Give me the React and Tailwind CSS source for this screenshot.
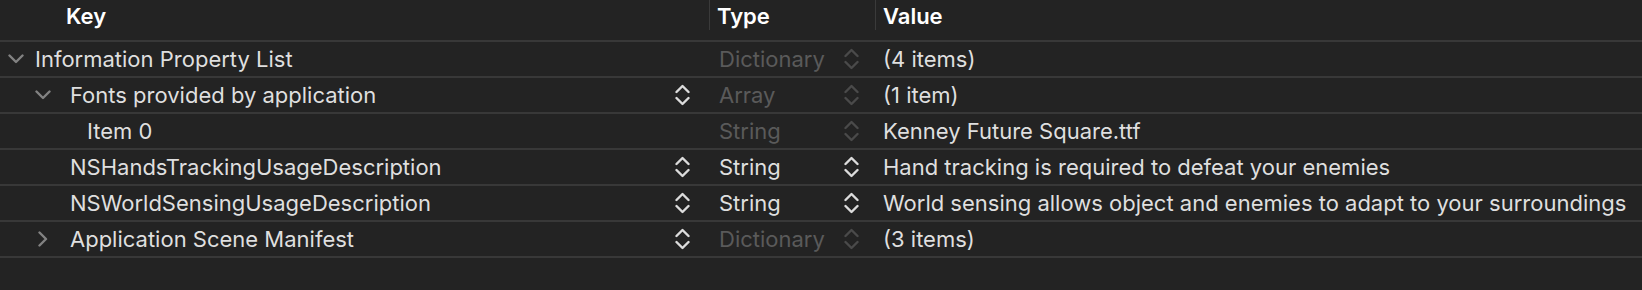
import React from 'react';

const rows = [
  { key: 'Information Property List', level: 0, toggle: 'open', keyStepper: false, type: 'Dictionary', typeDim: true, value: '(4 items)' },
  { key: 'Fonts provided by application', level: 1, toggle: 'open', keyStepper: true, type: 'Array', typeDim: true, value: '(1 item)' },
  { key: 'Item 0', level: 2, toggle: null, keyStepper: false, type: 'String', typeDim: true, value: 'Kenney Future Square.ttf' },
  { key: 'NSHandsTrackingUsageDescription', level: 1, toggle: null, keyStepper: true, type: 'String', typeDim: false, value: 'Hand tracking is required to defeat your enemies' },
  { key: 'NSWorldSensingUsageDescription', level: 1, toggle: null, keyStepper: true, type: 'String', typeDim: false, value: 'World sensing allows object and enemies to adapt to your surroundings' },
  { key: 'Application Scene Manifest', level: 1, toggle: 'closed', keyStepper: true, type: 'Dictionary', typeDim: true, value: '(3 items)' },
];

const Stepper = ({ dim }) => (
  <svg width="15" height="22" viewBox="0 0 15 22" fill="none" className={dim ? 'text-[#4a4a4a]' : 'text-[#dcdcdc]'}>
    <path d="M1.5 8 L7.5 2 L13.5 8" stroke="currentColor" strokeWidth="2.4" strokeLinecap="round" strokeLinejoin="round" />
    <path d="M1.5 14 L7.5 20 L13.5 14" stroke="currentColor" strokeWidth="2.4" strokeLinecap="round" strokeLinejoin="round" />
  </svg>
);

const Disclosure = ({ state }) => {
  if (state === 'open') {
    return (
      <svg width="16" height="10" viewBox="0 0 16 10" fill="none" className="text-[#828282]">
        <path d="M1.5 1.5 L8 8 L14.5 1.5" stroke="currentColor" strokeWidth="2.4" strokeLinecap="round" strokeLinejoin="round" />
      </svg>
    );
  }
  return (
    <svg width="10" height="16" viewBox="0 0 10 16" fill="none" className="text-[#828282]">
      <path d="M1.5 1.5 L8 8 L1.5 14.5" stroke="currentColor" strokeWidth="2.4" strokeLinecap="round" strokeLinejoin="round" />
    </svg>
  );
};

const KeyCell = ({ row }) => {
  const toggleBox = {
    0: 'w-[35px] pl-[8px]',
    1: 'w-[70px] pl-[35px]',
    2: 'w-[87px]',
  }[row.level];
  return (
    <div className="flex items-center h-full pr-[19px]">
      <div className={`flex items-center shrink-0 ${toggleBox}`}>
        {row.toggle === 'open' && <Disclosure state="open" />}
        {row.toggle === 'closed' && (
          <span className="pl-[3px]">
            <Disclosure state="closed" />
          </span>
        )}
      </div>
      <span className="flex-1 whitespace-nowrap text-[#dfdfdf]">{row.key}</span>
      {row.keyStepper && <Stepper />}
    </div>
  );
};

export default function App() {
  return (
    <div
      className="w-[1642px] h-[290px] bg-[#232323] overflow-hidden text-[22px] leading-none"
      style={{ fontFamily: 'Inter, "Noto Sans", sans-serif' }}
    >
      <div className="grid grid-cols-[709px_166px_1fr] h-[42px] border-b-2 border-[#383838]">
        <div className="pl-[66px] pt-[5px] font-semibold text-white">Key</div>
        <div className="h-[30px] border-l border-[#3a3a3a] pl-[7px] pt-[5px] font-semibold text-white">Type</div>
        <div className="h-[30px] border-l border-[#3a3a3a] pl-[7px] pt-[5px] font-semibold text-white">Value</div>
      </div>
      {rows.map((row) => (
        <div key={row.key} className="grid grid-cols-[709px_166px_1fr] h-[36px] border-b-2 border-[#383838]">
          <KeyCell row={row} />
          <div className="flex items-center h-full pl-[10px] pr-[16px]">
            <span className={`flex-1 ${row.typeDim ? 'text-[#5a5a5a]' : 'text-[#dfdfdf]'}`}>{row.type}</span>
            <Stepper dim={row.typeDim} />
          </div>
          <div className="flex items-center h-full pl-[8px] text-[#dfdfdf] whitespace-nowrap">{row.value}</div>
        </div>
      ))}
    </div>
  );
}
